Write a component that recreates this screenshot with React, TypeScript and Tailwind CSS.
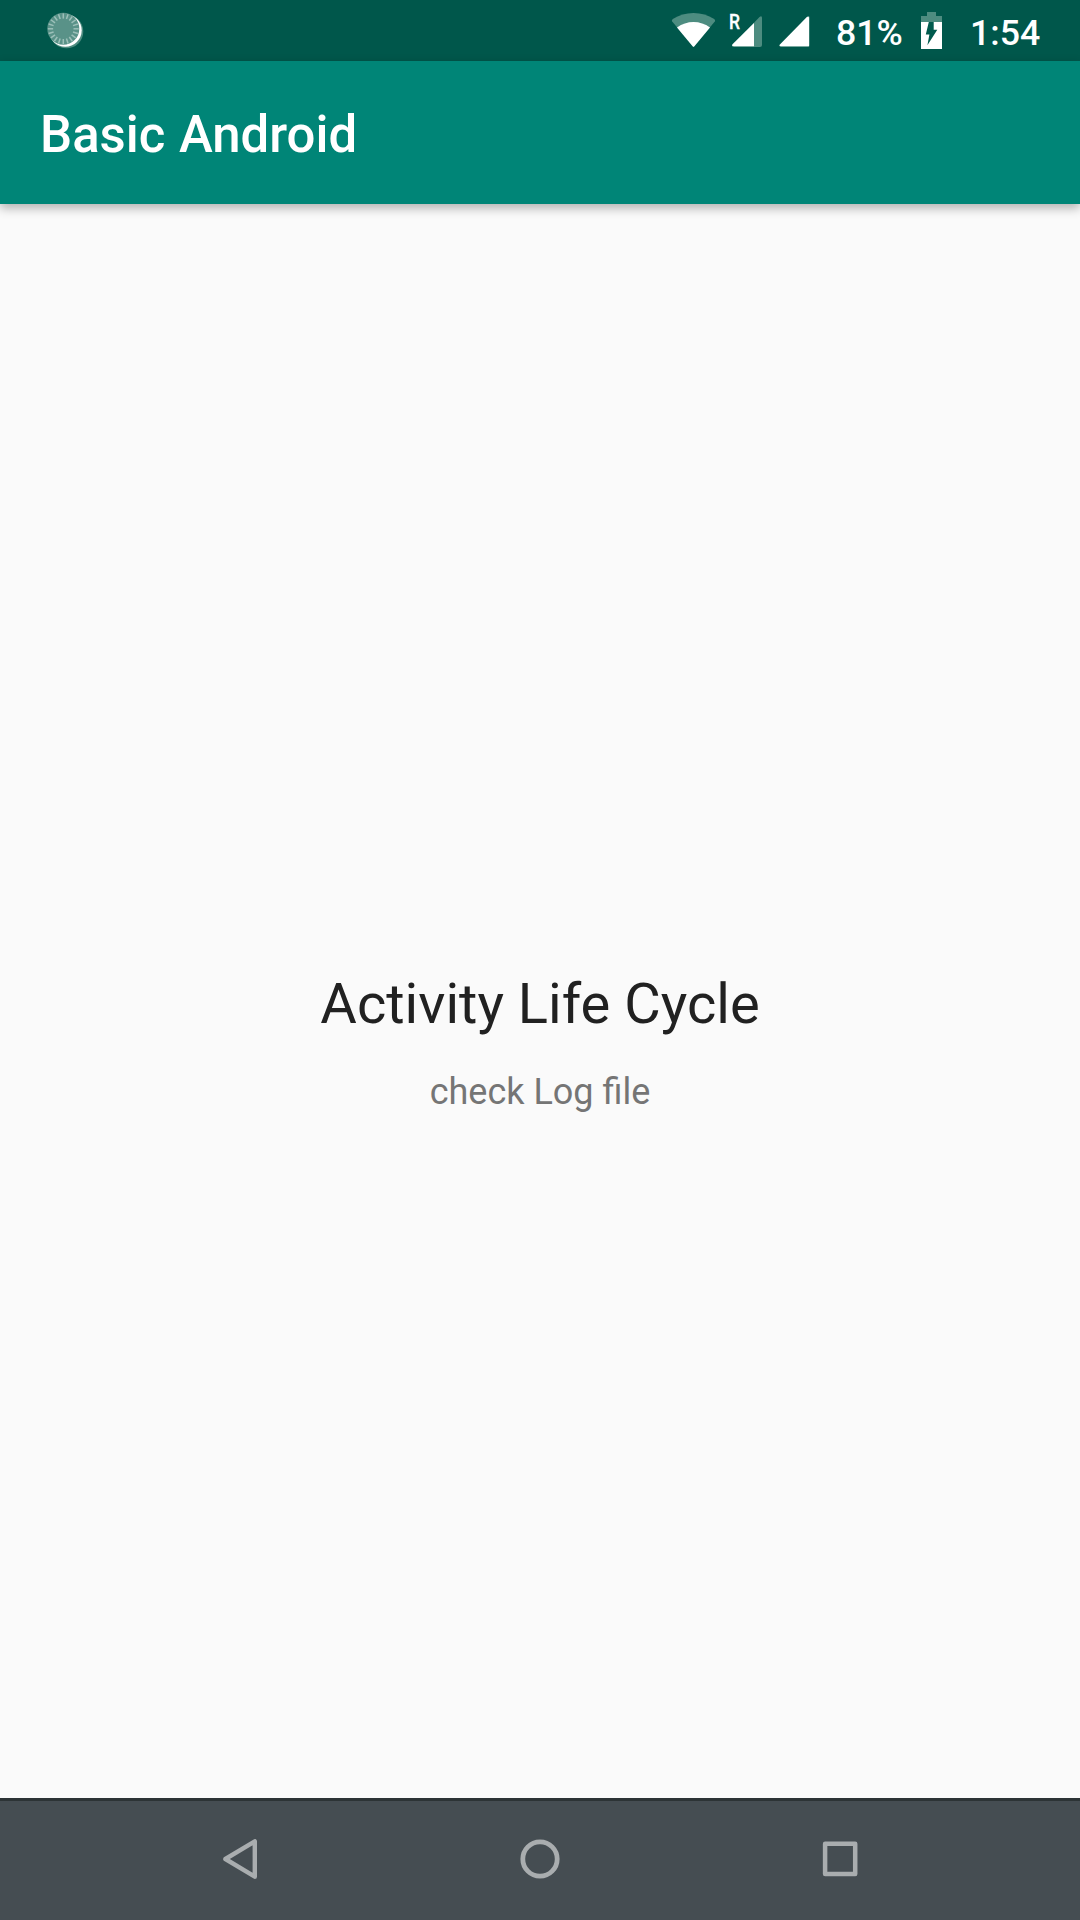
function SyncIcon() {
  const ticks = Array.from({ length: 20 }, (_, i) => i * 18);
  return (
    <svg className="ml-[45px] h-[61px] w-[40px]" viewBox="45 0 40 61">
      <circle cx="66.5" cy="31.5" r="16.8" fill="#4d8c80" />
      <circle cx="65.3" cy="30.3" r="16.4" fill="#fff" />
      <circle cx="63.3" cy="28.8" r="16" fill="#599288" />
      {ticks.map((a) => (
        <path key={a} d="M63.3 13.4v5.2" stroke="#9cc0b9" strokeWidth="1.5" transform={`rotate(${a} 63.3 28.8)`} />
      ))}
    </svg>
  );
}

function WifiIcon() {
  return (
    <svg className="h-[61px] w-[46px]" viewBox="671 0 46 61">
      <path d="M693.5 47L672.2 21.5Q671.3 20 672.8 19Q682 13 693.5 13T714.2 19Q715.7 20 714.8 21.5Z" fill="#4d8c80" />
      <path d="M692.6 46.3L677 27.5Q684.5 22 693.5 22T710 27.5L694.4 46.3Q693.5 47.3 692.6 46.3Z" fill="#fff" />
    </svg>
  );
}

function RoamingSignalIcon() {
  return (
    <svg className="ml-[11px] h-[61px] w-[38px]" viewBox="728 0 38 61">
      <path d="M732 46L759.5 17Q762 15.3 762 18V45Q762 47 760 47H734Q732 47 732 46Z" fill="#4d8c80" />
      <path d="M754 23V46.3H734Q731 46 732.5 44.2Z" fill="#fff" />
      <text x="729" y="29" fontFamily="Roboto, sans-serif" fontWeight="500" fontSize="19.5" textLength="11" lengthAdjust="spacingAndGlyphs" fill="#fff" stroke="#fff" strokeWidth="0.3">R</text>
    </svg>
  );
}

function SignalIcon() {
  return (
    <svg className="ml-[12px] h-[61px] w-[34px]" viewBox="778 0 34 61">
      <path d="M780.2 44.2L807.4 16.8Q809.7 15.2 809.7 18V45Q809.7 47 807.7 47H781Q778.4 46.5 780.2 44.2Z" fill="#4d8c80" />
      <path d="M780.2 44.2L806.9 17Q809 15.4 809 18V46.3H781Q778.4 46 780.2 44.2Z" fill="#fff" />
    </svg>
  );
}

function BatteryIcon() {
  return (
    <svg className="h-[61px] w-[21px]" viewBox="921 0 21 61">
      <path d="M927 12h9v4h6v6h-21v-6h6Z" fill="#4d8c80" />
      <path d="M921 22h21v27h-21Z" fill="#fff" />
      <path d="M928.8 22H933.7V29.8H937.3L927.4 45.3L929.4 34.5H925.8Z" fill="#005a4d" />
    </svg>
  );
}

export default function App() {
  return (
    <div className="flex h-[1920px] w-[1080px] flex-col bg-[#fafafa] font-[Roboto,sans-serif]">
      <div className="flex h-[61px] shrink-0 bg-[#00574b] text-white">
        <SyncIcon />
        <div className="ml-auto flex">
          <WifiIcon />
          <RoamingSignalIcon />
          <SignalIcon />
          <span className="ml-[24px] w-[85px] whitespace-nowrap pt-[3px] text-[35.7px] font-medium leading-[61px]">81%</span>
          <BatteryIcon />
          <span className="ml-[28px] w-[110px] whitespace-nowrap pt-[3px] text-[35.7px] font-medium leading-[61px]">1:54</span>
        </div>
      </div>
      <header className="z-10 flex h-[143px] shrink-0 items-center bg-[#008577] pl-[40px] pt-[4px] shadow-[0_4px_10px_rgba(0,0,0,0.3)]">
        <h1 className="text-[50.9px] font-medium leading-[60px] text-white [word-spacing:1px]">Basic Android</h1>
      </header>
      <main className="flex h-[1594px] shrink-0 flex-col items-center pt-[767px]">
        <h2 className="text-[56.1px] leading-[66px] text-[#212121]">Activity Life Cycle</h2>
        <p className="mt-[34px] text-[36px] leading-[43px] text-[#757575]">check Log file</p>
      </main>
      <nav className="flex h-[122px] items-center justify-between border-t-[3px] border-[#2c3335] bg-[#454d52] px-[220px] pb-[3px]">
        <svg className="size-[40px]" viewBox="220 1839 40 40" fill="none" stroke="#a9adaf" strokeWidth="4.4" strokeLinejoin="round">
          <path d="M225.4 1859L254.8 1841.3V1876.7Z" />
        </svg>
        <svg className="size-[40px]" viewBox="0 0 40 40" fill="none" stroke="#a9adaf" strokeWidth="4.8">
          <circle cx="20" cy="20" r="17.2" />
        </svg>
        <svg className="size-[40px]" viewBox="820 1839 40 40" fill="none" stroke="#a9adaf" strokeWidth="4.5" strokeLinejoin="round">
          <path d="M825.1 1843.8h30.1v30.1h-30.1Z" />
        </svg>
      </nav>
    </div>
  );
}
